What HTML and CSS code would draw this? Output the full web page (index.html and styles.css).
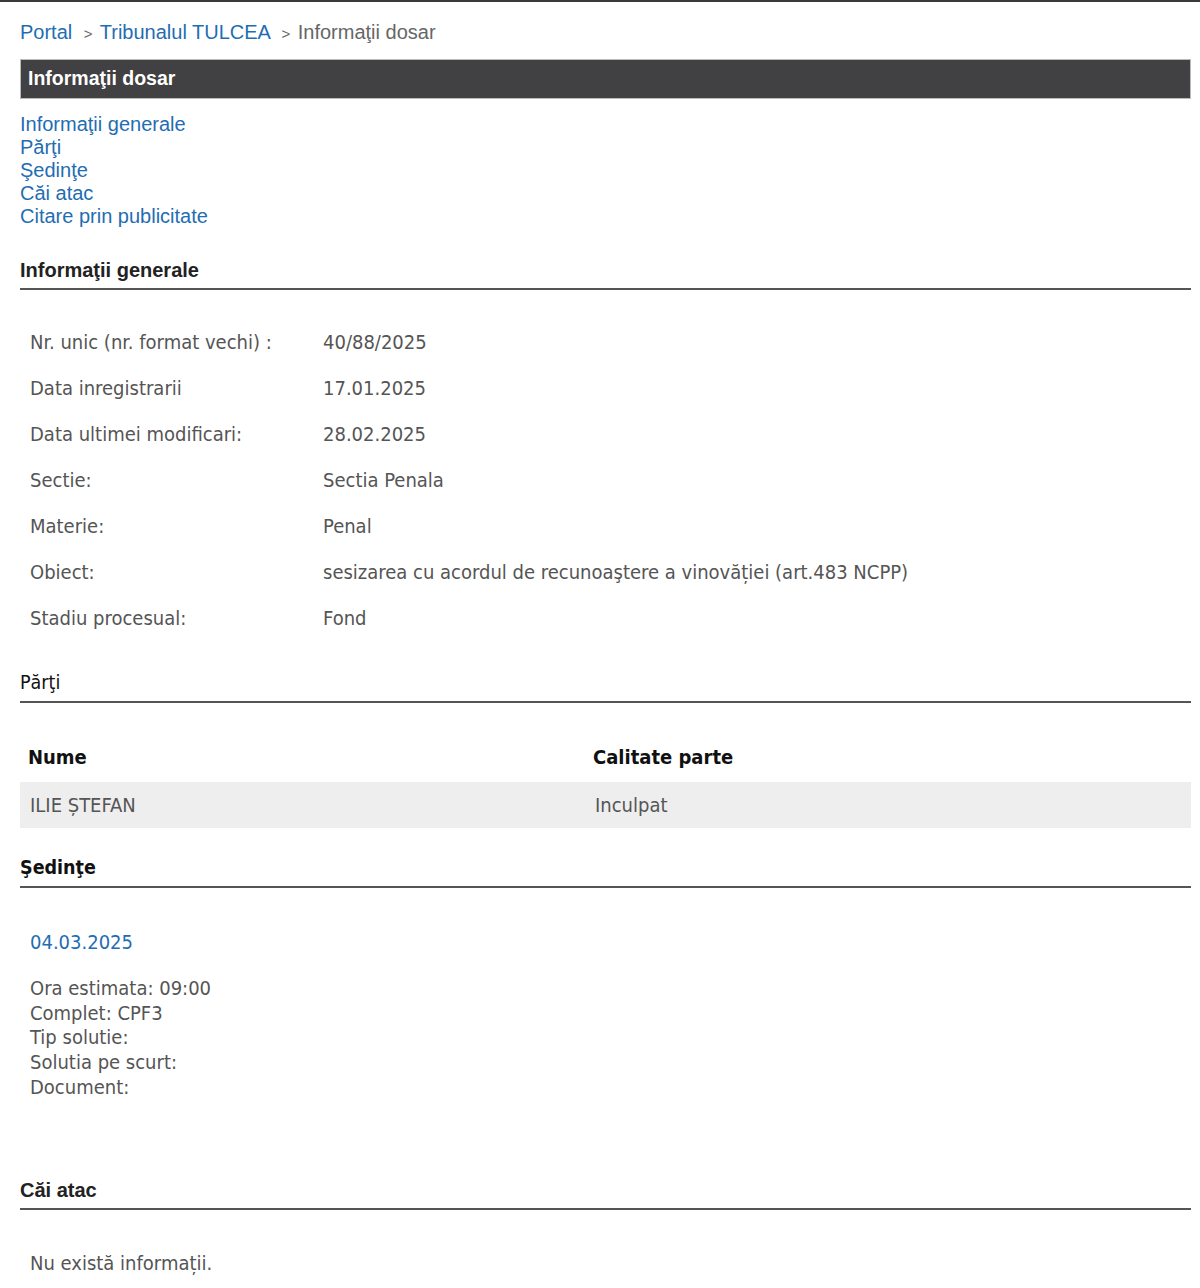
FILE: index.html
```
<!DOCTYPE html>
<html lang="ro">

<head>
    <meta charset="UTF-8">
    <meta name="viewport" content="width=device-width, initial-scale=1.0">
    <title>Informaţii dosar</title>
    <link rel="stylesheet" href="styles.css">
</head>

<body>
    <div class="page">
        <div class="breadcrumb">
            <a href="#">Portal</a>
            <span class="sep">&gt;</span>
            <a href="#">Tribunalul TULCEA</a>
            <span class="sep">&gt;</span>
            <span class="current">Informaţii dosar</span>
        </div>

        <div class="title-bar">Informaţii dosar</div>

        <!-- anchors to each section -->
        <ul class="section-links">
            <li><a href="#generale">Informaţii generale</a></li>
            <li><a href="#parti">Părţi</a></li>
            <li><a href="#sedinte">Şedinţe</a></li>
            <li><a href="#cai">Căi atac</a></li>
            <li><a href="#citare">Citare prin publicitate</a></li>
        </ul>

        <h3 class="section-title" id="generale">Informaţii generale</h3>
        <table class="info-table">
            <tr>
                <td class="label">Nr. unic (nr. format vechi) :</td>
                <td>40/88/2025</td>
            </tr>
            <tr>
                <td class="label">Data inregistrarii</td>
                <td>17.01.2025</td>
            </tr>
            <tr>
                <td class="label">Data ultimei modificari:</td>
                <td>28.02.2025</td>
            </tr>
            <tr>
                <td class="label">Sectie:</td>
                <td>Sectia Penala</td>
            </tr>
            <tr>
                <td class="label">Materie:</td>
                <td>Penal</td>
            </tr>
            <tr>
                <td class="label">Obiect:</td>
                <td>sesizarea cu acordul de recunoaştere a vinovăției (art.483 NCPP)</td>
            </tr>
            <tr>
                <td class="label">Stadiu procesual:</td>
                <td>Fond</td>
            </tr>
        </table>

        <h3 class="section-title alt" id="parti">Părţi</h3>
        <table class="parti-table">
            <tr>
                <th>Nume</th>
                <th>Calitate parte</th>
            </tr>
            <tr class="shaded">
                <td>ILIE ȘTEFAN</td>
                <td>Inculpat</td>
            </tr>
        </table>

        <h3 class="section-title alt bold" id="sedinte">Şedinţe</h3>
        <div class="sedinta">
            <a class="sedinta-date" href="#">04.03.2025</a>
            <div class="sedinta-details">
                Ora estimata: 09:00<br>
                Complet: CPF3<br>
                Tip solutie:<br>
                Solutia pe scurt:<br>
                Document:
            </div>
        </div>

        <h3 class="section-title" id="cai">Căi atac</h3>
        <p class="empty">Nu există informații.</p>
    </div>
</body>

</html>
```
FILE: styles.css
```
body {
    margin: 0;
    padding: 0;
    background: #fff;
    border-top: 2px solid #3a3a3a;
    font-family: "Liberation Sans", Arial, sans-serif;
}

.page {
    padding: 0 9px 0 20px;
}

a {
    color: #1f6db3;
    text-decoration: none;
}

.breadcrumb {
    padding-top: 19px;
    height: 38px;
    font-size: 20px;
    line-height: 23px;
    color: #666;
}

.breadcrumb .sep {
    font-size: 15px;
    margin: 0 2px 0 6px;
    color: #666;
}

.title-bar {
    background: #414042;
    border: 1px solid #bbb;
    color: #fff;
    font-weight: bold;
    font-size: 19.5px;
    height: 38px;
    line-height: 36px;
    padding-left: 7px;
}

.section-links {
    list-style: none;
    margin: 14px 0 0;
    padding: 0;
    font-size: 20px;
    line-height: 23px;
}

.section-title {
    margin: 30px 0 0;
    font-size: 20px;
    font-weight: bold;
    color: #222;
    line-height: 24px;
    padding-bottom: 6px;
    border-bottom: 2px solid #555;
}

.section-title.alt {
    font-family: "DejaVu Sans Condensed", "DejaVu Sans", sans-serif;
    font-weight: normal;
    font-size: 19.5px;
    color: #111;
}

.section-title.alt.bold {
    font-weight: bold;
    margin-top: 28px;
}

.info-table,
.parti-table {
    border-collapse: collapse;
    width: 100%;
    font-family: "DejaVu Sans Condensed", "DejaVu Sans", sans-serif;
    font-size: 20px;
    line-height: 24px;
    color: #555;
}

.info-table {
    margin-top: 29px;
}

.info-table td {
    height: 46px;
    padding: 0 0 0 10px;
    vertical-align: middle;
}

.info-table td.label {
    width: 283px;
}

.parti-table {
    margin-top: 28px;
}

.parti-table th {
    text-align: left;
    color: #111;
    font-weight: bold;
    height: 51px;
    padding: 0 0 0 8px;
}

.parti-table th:first-child,
.parti-table td:first-child {
    width: 555px;
}

.parti-table td {
    height: 46px;
    padding: 0 0 0 10px;
}

.parti-table tr.shaded td {
    background: #eee;
}

.sedinta {
    padding: 42px 0 0 10px;
    font-family: "DejaVu Sans Condensed", "DejaVu Sans", sans-serif;
    font-size: 20px;
    color: #555;
    height: 242px;
    box-sizing: border-box;
}

.sedinta-date {
    display: block;
    color: #1f6db3;
}

.sedinta-details {
    margin-top: 22px;
    line-height: 24.7px;
}

.section-title#cai {
    margin-top: 48px;
}

.empty {
    margin: 41px 0 0 10px;
    font-family: "DejaVu Sans Condensed", "DejaVu Sans", sans-serif;
    font-size: 20px;
    color: #555;
}
```
